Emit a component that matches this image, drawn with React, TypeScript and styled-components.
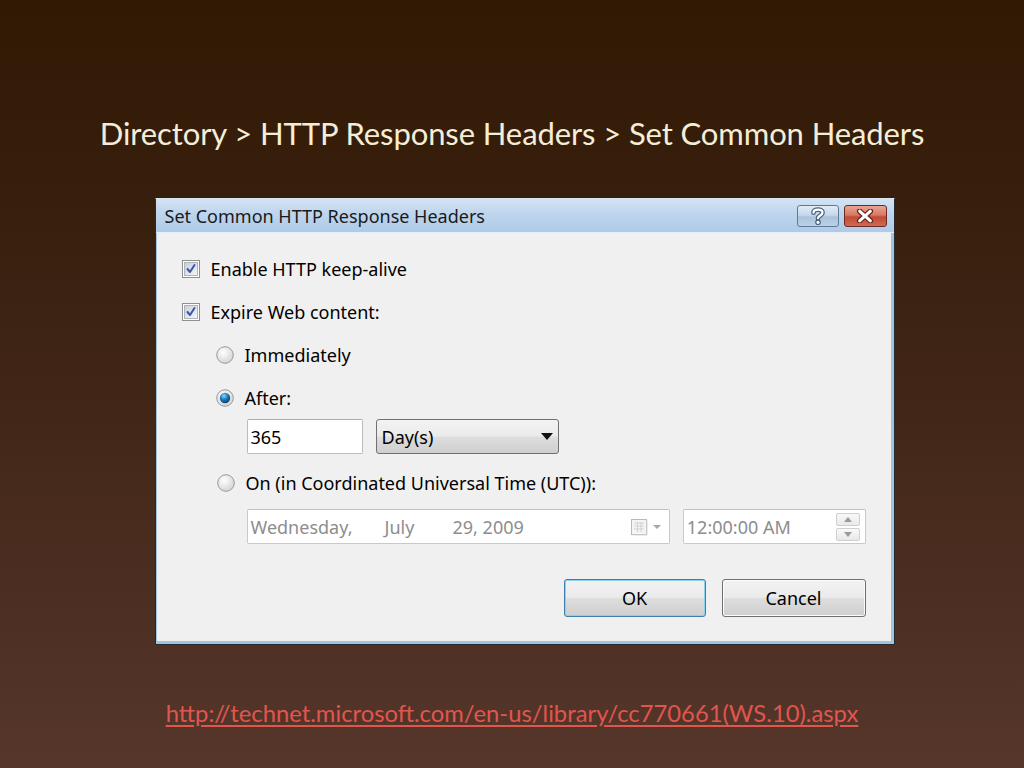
import React from 'react'
import styled, { createGlobalStyle } from 'styled-components'

const GlobalStyle = createGlobalStyle`
  html, body {
    margin: 0;
    padding: 0;
  }
  body {
    width: 1024px;
    height: 768px;
    overflow: hidden;
    background: linear-gradient(180deg, #311904 0%, #3a2110 35%, #56362b 100%);
  }
`

const Slide = styled.div`
  width: 1024px;
  height: 768px;
  display: flex;
  flex-direction: column;
  align-items: center;
`

const SlideTitle = styled.h1`
  margin: 112px 0 0;
  height: 42px;
  line-height: 42px;
  font-family: Lato, 'Open Sans', sans-serif;
  font-weight: 400;
  font-size: 31px;
  letter-spacing: -0.1px;
  color: #f4eed8;
`

const Dialog = styled.div`
  margin: 44px 0 0 25px;
  width: 740px;
  height: 447px;
  box-sizing: border-box;
  border: 1px solid #2a2a2a;
  border-top-color: #d8e4ef;
  display: flex;
  flex-direction: column;
  background: #9fc3e2;
  font-family: 'Noto Sans', 'Open Sans', sans-serif;
  font-size: 18px;
  color: #000;
`

const TitleBar = styled.div`
  height: 35px;
  display: flex;
  align-items: center;
  padding: 0 7px 0 9px;
  background: linear-gradient(180deg, #d3e3f3 0%, #bed5ee 45%, #aecbe8 100%);
  border-bottom: 1px solid #e6eef6;
`

const TitleText = styled.div`
  flex: 1;
  font-size: 18px;
  color: #1a1a1a;
`

const CaptionButton = styled.div<{ $close?: boolean }>`
  width: ${p => (p.$close ? 43 : 42)}px;
  height: 22px;
  margin-left: ${p => (p.$close ? 5 : 0)}px;
  box-sizing: border-box;
  border-radius: 3px;
  border: 1px solid ${p => (p.$close ? '#6b2a22' : '#5d7a97')};
  background: ${p =>
    p.$close
      ? 'linear-gradient(180deg, #e9a493 0%, #d77a66 45%, #c24a35 55%, #d06a52 100%)'
      : 'linear-gradient(180deg, #e1ebf5 0%, #c7d8ea 45%, #a9c2dc 55%, #bcd1e6 100%)'};
  display: flex;
  align-items: center;
  justify-content: center;
`

const Body = styled.div`
  flex: 1;
  margin: 0 3px 3px 1px;
  background: #f0f0f0;
  display: flex;
  flex-direction: column;
  padding: 14px 25px 24px 25px;
`

const OptionRow = styled.label<{ $indent?: number }>`
  height: 43px;
  display: flex;
  align-items: center;
  padding-left: ${p => p.$indent || 0}px;
  gap: 11px;
  white-space: nowrap;
`

const FieldRow = styled.div<{ $top?: number }>`
  height: 35px;
  margin-top: ${p => p.$top || 0}px;
  padding-left: 65px;
  display: flex;
  gap: 13px;
`

const TextBox = styled.div<{ $w: number; $disabled?: boolean }>`
  width: ${p => p.$w}px;
  box-sizing: border-box;
  border: 1px solid ${p => (p.$disabled ? '#c9c9c9' : '#bcbcbc')};
  border-top-color: ${p => (p.$disabled ? '#c2c2c2' : '#abadb3')};
  border-radius: 2px;
  background: #fff;
  display: flex;
  align-items: center;
  padding: 0 3px 0 3px;
  color: ${p => (p.$disabled ? '#8d8d8d' : '#000')};
  white-space: pre;
`

const Select = styled.div`
  width: 183px;
  box-sizing: border-box;
  border: 1px solid #707070;
  border-radius: 3px;
  background: linear-gradient(180deg, #f3f3f3 0%, #ebebeb 48%, #dddddd 52%, #cfcfcf 100%);
  display: flex;
  align-items: center;
  padding: 0 5px 0 5px;
`

const Grow = styled.span`
  flex: 1;
`

const DatePart = styled.span<{ $w: number }>`
  display: inline-block;
  width: ${p => p.$w}px;
`

const Spinner = styled.div`
  display: flex;
  flex-direction: column;
  gap: 2px;
  margin-right: 2px;
`

const SpinButton = styled.div`
  width: 22px;
  height: 11px;
  border: 1px solid #cfcfcf;
  border-radius: 2px;
  background: linear-gradient(180deg, #f8f8f8, #e9e9e9);
  display: flex;
  align-items: center;
  justify-content: center;
`

const ButtonRow = styled.div`
  margin-top: 35px;
  display: flex;
  justify-content: flex-end;
  gap: 16px;
`

const PushButton = styled.div<{ $default?: boolean; $w: number }>`
  width: ${p => p.$w}px;
  height: 38px;
  box-sizing: border-box;
  border-radius: 3px;
  border: 1px solid ${p => (p.$default ? '#3c7fb1' : '#707070')};
  box-shadow: ${p => (p.$default ? '0 0 0 1px #8ed0f0 inset' : '0 0 0 1px #fbfbfb inset')};
  background: linear-gradient(180deg, #f2f2f2 0%, #ebebeb 48%, #dddddd 52%, #cfcfcf 100%);
  display: flex;
  align-items: center;
  justify-content: center;
`

const Link = styled.a`
  margin-top: 56px;
  line-height: 24px;
  font-family: Lato, 'Open Sans', sans-serif;
  font-size: 23.8px;
  color: #e0564f;
  text-decoration: underline;
  text-underline-offset: 3px;
`

const CheckBox = () => (
  <svg width="18" height="18" viewBox="0 0 18 18">
    <defs>
      <linearGradient id="cbg" x1="0" y1="0" x2="1" y2="1">
        <stop offset="0" stopColor="#c9ced9" />
        <stop offset="1" stopColor="#f5f6f8" />
      </linearGradient>
    </defs>
    <rect x="0.5" y="0.5" width="17" height="17" fill="#fff" stroke="#8e8f8f" />
    <rect x="2.5" y="2.5" width="13" height="13" fill="url(#cbg)" stroke="#aeb3bd" />
    <path d="M5.5 9 L8 12 L12.5 5" fill="none" stroke="#3b58a8" strokeWidth="2" strokeLinecap="round" strokeLinejoin="round" />
  </svg>
)

const Radio = ({ checked }: { checked?: boolean }) => (
  <svg width="18" height="18" viewBox="0 0 18 18">
    <defs>
      <radialGradient id="rbg" cx="0.4" cy="0.35" r="0.7">
        <stop offset="0" stopColor="#ffffff" />
        <stop offset="1" stopColor="#d2d2d2" />
      </radialGradient>
      <radialGradient id="rdot" cx="0.4" cy="0.3" r="0.7">
        <stop offset="0" stopColor="#8fd6f6" />
        <stop offset="0.5" stopColor="#1f7fbf" />
        <stop offset="1" stopColor="#0d3f6d" />
      </radialGradient>
    </defs>
    <circle cx="9" cy="9" r="8.3" fill="url(#rbg)" stroke="#9a9a9a" strokeWidth="1" />
    {checked && <circle cx="9" cy="9" r="5.2" fill="url(#rdot)" />}
  </svg>
)

const DropArrow = () => (
  <svg width="12" height="7" viewBox="0 0 12 7">
    <path d="M0 0 H12 L6 7 Z" fill="#111" />
  </svg>
)

const CalendarIcon = () => (
  <svg width="36" height="18" viewBox="0 0 36 18">
    <rect x="1.5" y="1.5" width="15" height="15" fill="#f4f4f4" stroke="#b9b9b9" />
    <path d="M4 5 H14 M4 8 H14 M4 11 H14 M7.5 4 V14 M11 4 V14" stroke="#d2d2d2" strokeWidth="1" />
    <path d="M17 3 V17 H3" fill="none" stroke="#d8d8d8" />
    <path d="M23 7 H31 L27 11 Z" fill="#a8a8a8" />
  </svg>
)

const SpinArrow = ({ up }: { up?: boolean }) => (
  <svg width="8" height="5" viewBox="0 0 8 5">
    <path d={up ? 'M0 5 H8 L4 0 Z' : 'M0 0 H8 L4 5 Z'} fill="#9a9a9a" />
  </svg>
)

const HelpGlyph = () => (
  <svg width="16" height="18" viewBox="0 0 14 16">
    <path
      d="M3 5 C3 1.5 11 1.5 11 5 C11 7.5 7 7.5 7 10"
      fill="none"
      stroke="#46617e"
      strokeWidth="4.2"
      strokeLinecap="round"
    />
    <path
      d="M3 5 C3 1.5 11 1.5 11 5 C11 7.5 7 7.5 7 10"
      fill="none"
      stroke="#fff"
      strokeWidth="2"
      strokeLinecap="round"
    />
    <circle cx="7" cy="13.6" r="2" fill="#fff" stroke="#46617e" strokeWidth="1.1" />
  </svg>
)

const CloseGlyph = () => (
  <svg width="18" height="14" viewBox="0 0 16 13">
    <path d="M3 2 L13 11 M13 2 L3 11" stroke="#6a2218" strokeWidth="5" strokeLinecap="round" />
    <path d="M3 2 L13 11 M13 2 L3 11" stroke="#fff" strokeWidth="2.8" strokeLinecap="round" />
  </svg>
)

export default function App() {
  return (
    <>
      <GlobalStyle />
      <Slide>
        <SlideTitle>Directory &gt; HTTP Response Headers &gt; Set Common Headers</SlideTitle>
        <Dialog>
          <TitleBar>
            <TitleText>Set Common HTTP Response Headers</TitleText>
            <CaptionButton>
              <HelpGlyph />
            </CaptionButton>
            <CaptionButton $close>
              <CloseGlyph />
            </CaptionButton>
          </TitleBar>
          <Body>
            <OptionRow>
              <CheckBox />
              Enable HTTP keep-alive
            </OptionRow>
            <OptionRow>
              <CheckBox />
              Expire Web content:
            </OptionRow>
            <OptionRow $indent={34}>
              <Radio />
              Immediately
            </OptionRow>
            <OptionRow $indent={34}>
              <Radio checked />
              After:
            </OptionRow>
            <FieldRow>
              <TextBox $w={116}>365</TextBox>
              <Select>
                <Grow>Day(s)</Grow>
                <DropArrow />
              </Select>
            </FieldRow>
            <OptionRow $indent={35} style={{ marginTop: 7 }}>
              <Radio />
              On (in Coordinated Universal Time (UTC)):
            </OptionRow>
            <FieldRow $top={5}>
              <TextBox $w={424} $disabled>
                <DatePart $w={134}>Wednesday,</DatePart>
                <DatePart $w={68}>July</DatePart>
                <Grow>29, 2009</Grow>
                <CalendarIcon />
              </TextBox>
              <TextBox $w={183} $disabled>
                <Grow>12:00:00 AM</Grow>
                <Spinner>
                  <SpinButton>
                    <SpinArrow up />
                  </SpinButton>
                  <SpinButton>
                    <SpinArrow />
                  </SpinButton>
                </Spinner>
              </TextBox>
            </FieldRow>
            <ButtonRow>
              <PushButton $default $w={142}>OK</PushButton>
              <PushButton $w={144}>Cancel</PushButton>
            </ButtonRow>
          </Body>
        </Dialog>
        <Link href="#">http://technet.microsoft.com/en-us/library/cc770661(WS.10).aspx</Link>
      </Slide>
    </>
  )
}
